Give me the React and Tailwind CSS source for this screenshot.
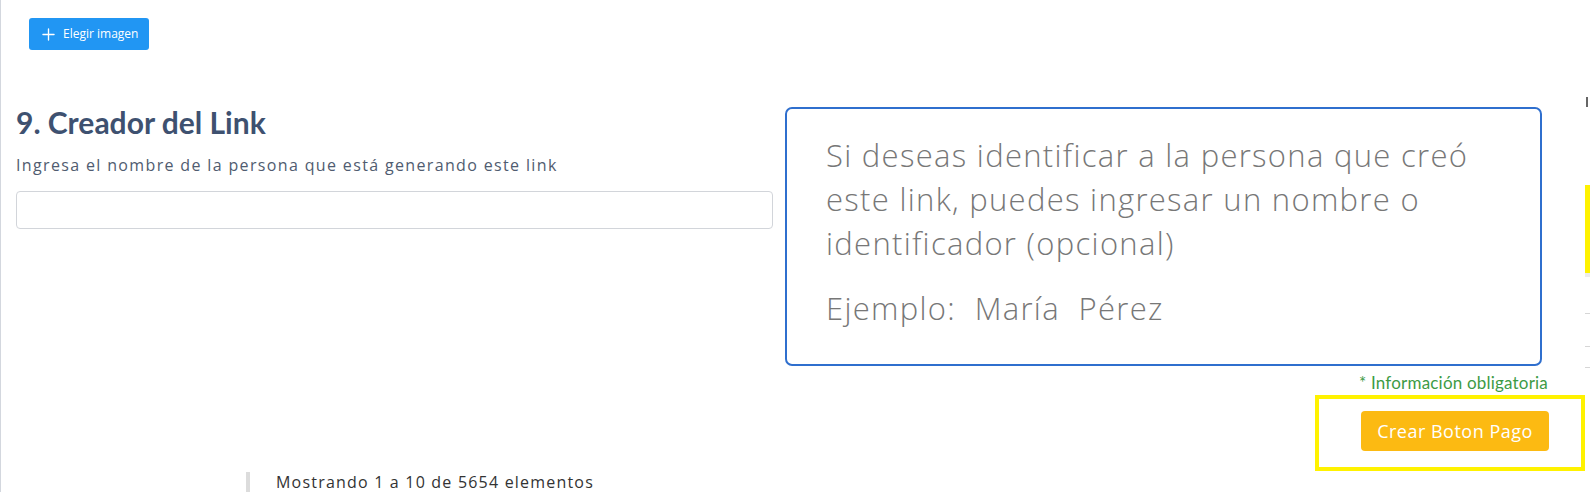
import { Plus } from 'lucide-react';

function App() {
  return (
    <div className="flex h-[492px] w-[1590px] overflow-hidden bg-white font-['Open_Sans',sans-serif]">
      {/* main column */}
      <div className="flex w-[1585px] shrink-0 flex-col border-l border-[#d3d7de]">
        <div className="pl-[28px] pt-[18px]">
          <button className="flex h-[32px] w-[120px] items-center gap-[5px] rounded-[3px] bg-[#2196f3] pl-[10px] text-[12px] text-white">
            <Plus size={19} strokeWidth={1.7} />
            <span>Elegir imagen</span>
          </button>
        </div>

        <div className="mt-[57px] flex pl-[15px]">
          <div className="w-[757px]">
            <h2 className="font-['Lato',sans-serif] text-[30px] font-bold leading-[30px] text-[#3e5170]">9. Creador del Link</h2>
            <p className="mt-[16px] text-[16px] leading-[24px] tracking-[1.35px] text-[#505c70]">Ingresa el nombre de la persona que está generando este link</p>
            <input type="text" className="mt-[14px] h-[38px] w-full rounded-[4px] border border-[#d2d5da]" />
          </div>
          <div className="ml-[12px] h-[259px] w-[757px] rounded-[7px] border-2 border-[#2f6fce] pl-[39px] pt-[24px] text-[31px] font-light leading-[44px] tracking-[1.3px] text-[#777]">
            <p>
              Si deseas identificar a la persona que creó<br />
              este link, puedes ingresar un nombre o<br />
              identificador (opcional)
            </p>
            <p className="mt-[21px]">Ejemplo:&nbsp; María&nbsp; Pérez</p>
          </div>
        </div>

        <p className="mr-[37px] mt-[7px] self-end font-['Lato',sans-serif] text-[17px] leading-[20px] tracking-[0.2px] text-[#3d9b45]">* Información obligatoria</p>

        <div className="mt-[2px] h-[76px] w-[270px] self-end border-4 border-[#fff200] pl-[42px] pt-[12px]">
          <button className="h-[40px] w-[188px] rounded-[4px] bg-[#fcba12] text-[18px] tracking-[0.5px] text-white">Crear Boton Pago</button>
        </div>

        <div className="ml-[245px] mt-[1px] flex items-start">
          <div className="h-[20px] w-[4px] bg-[#dcdcdc]" />
          <p className="ml-[26px] text-[16px] leading-[20px] tracking-[1.2px] text-[#333]">Mostrando 1 a 10 de 5654 elementos</p>
        </div>
      </div>

      {/* clipped edge of the neighbouring panel */}
      <div className="flex w-[5px] shrink-0 flex-col">
        <div className="ml-[1px] mt-[97px] h-[10px] w-[2px] bg-[#666]" />
        <div className="mt-[78px] h-[88px] w-full bg-[#fff200]" />
        <div className="h-[4px] w-full bg-[#ececec]" />
        <div className="mt-[36px] h-px w-full bg-[#d6d6d6]" />
        <div className="mt-[32px] h-px w-full bg-[#d6d6d6]" />
        <div className="mt-[20px] h-px w-full bg-[#d6d6d6]" />
      </div>
    </div>
  );
}

export default App;
